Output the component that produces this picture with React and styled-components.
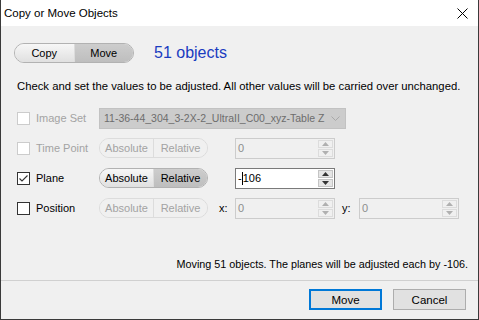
import React from "react";
import styled, { createGlobalStyle, css } from "styled-components";

const GlobalStyle = createGlobalStyle`
  html, body {
    margin: 0;
    padding: 0;
    background: #f0f0f0;
  }
  body {
    font-family: "Liberation Sans", Arial, sans-serif;
    font-size: 11px;
    color: #000;
  }
`;

const Window = styled.div`
  width: 479px;
  height: 320px;
  box-sizing: border-box;
  border: 1px solid #3a3a3a;
  border-top: none;
  background: #f0f0f0;
  display: flex;
  flex-direction: column;
  overflow: hidden;
`;

const TitleBar = styled.div`
  height: 26px;
  flex: none;
  background: #fff;
  display: flex;
  align-items: center;
  justify-content: space-between;
  padding: 0 10px 0 3px;
`;

const Title = styled.div`
  font-size: 11.5px;
  color: #000;
  padding-bottom: 1px;
`;

const CloseIcon = styled.svg`
  width: 11px;
  height: 11px;
  display: block;
`;

const Body = styled.div`
  flex: 1;
  display: flex;
  flex-direction: column;
  padding-top: 17px;
`;

const TopRow = styled.div`
  display: flex;
  align-items: center;
  height: 20px;
  padding-left: 13px;
`;

const Count = styled.div`
  margin-left: 20px;
  font-size: 16px;
  color: #1a3cc0;
  padding-bottom: 1px;
`;

const Segmented = styled.div`
  display: flex;
  box-sizing: border-box;
  width: ${({ width }) => width}px;
  height: 20px;
  border-radius: 10px;
  border: 1px solid ${({ disabled }) => (disabled ? "#dcdcdc" : "#b2b2b2")};
  overflow: hidden;
  flex: none;
`;

const Segment = styled.div`
  flex: 1;
  display: flex;
  align-items: center;
  justify-content: center;
  color: ${({ disabled }) => (disabled ? "#a3a3a3" : "#000")};
  & + & {
    border-left: 1px solid ${({ disabled }) => (disabled ? "#dcdcdc" : "#b8b8b8")};
  }
  ${({ disabled, selected }) =>
    disabled
      ? css`
          background: #f0f0f0;
        `
      : selected
      ? css`
          background: linear-gradient(#cdcdcd, #bebebe);
        `
      : css`
          background: linear-gradient(#f7f7f7, #e0e0e0);
        `}
`;

const Instructions = styled.div`
  margin-top: 17px;
  padding-left: 16px;
  line-height: 13px;
  height: 13px;
  font-size: 11.3px;
  white-space: nowrap;
`;

const Rows = styled.div`
  margin-top: 10px;
  display: flex;
  flex-direction: column;
`;

const Row = styled.div`
  height: 30px;
  display: flex;
  align-items: center;
  padding-left: 16px;
`;

const LabelCell = styled.div`
  width: 82px;
  flex: none;
  display: flex;
  align-items: center;
  gap: 6px;
  color: ${({ disabled }) => (disabled ? "#a3a3a3" : "#000")};
`;

const Box = styled.div`
  width: 13px;
  height: 13px;
  box-sizing: border-box;
  background: #fff;
  border: 1px solid ${({ disabled }) => (disabled ? "#cccccc" : "#333")};
  display: flex;
  align-items: center;
  justify-content: center;
`;

const Combo = styled.div`
  width: 247px;
  height: 21px;
  box-sizing: border-box;
  background: #cccccc;
  border: 1px solid #c2c2c2;
  display: flex;
  align-items: center;
  gap: 5px;
  padding: 0 5px 0 4px;
  color: #6d6d6d;
  font-size: 10.5px;
  white-space: nowrap;
`;

const ComboText = styled.span`
  flex: 1;
  overflow: hidden;
`;

const AxisLabel = styled.div`
  width: ${({ width }) => width}px;
  flex: none;
  box-sizing: border-box;
  padding-left: ${({ pad }) => pad}px;
  color: #000;
`;

const Spin = styled.div`
  width: 100px;
  height: 21px;
  flex: none;
  box-sizing: border-box;
  border: 1px solid ${({ disabled }) => (disabled ? "#cccccc" : "#7a7a7a")};
  background: ${({ disabled }) => (disabled ? "#f0f0f0" : "#fff")};
  display: flex;
  align-items: stretch;
  padding: 1px;
`;

const SpinText = styled.div`
  flex: 1;
  display: flex;
  align-items: center;
  padding-left: 1px;
  color: ${({ disabled }) => (disabled ? "#8d8d8d" : "#000")};
`;

const Caret = styled.span`
  display: inline-block;
  width: 1px;
  height: 13px;
  background: #000;
`;

const SpinButtons = styled.div`
  width: 15px;
  display: flex;
  flex-direction: column;
  gap: 1px;
`;

const SpinButton = styled.div`
  flex: 1;
  display: flex;
  align-items: center;
  justify-content: center;
  background: ${({ disabled }) => (disabled ? "#f0f0f0" : "#e5e5e5")};
  border: 1px solid ${({ disabled }) => (disabled ? "#dcdcdc" : "#c4c4c4")};
`;

const Status = styled.div`
  margin-top: 35px;
  height: 13px;
  line-height: 13px;
  text-align: right;
  padding-right: 10px;
  font-size: 10.8px;
`;

const Separator = styled.div`
  margin-top: 9px;
  height: 1px;
  background: #d0d0d0;
`;

const ButtonBar = styled.div`
  display: flex;
  justify-content: flex-end;
  gap: 11px;
  padding: 8px 12px 0 0;
`;

const Button = styled.div`
  width: 73px;
  height: 21px;
  box-sizing: border-box;
  background: #e1e1e1;
  border: ${({ primary }) => (primary ? "2px solid #0078d7" : "1px solid #adadad")};
  display: flex;
  align-items: center;
  justify-content: center;
  font-size: 11.5px;
`;

const Arrow = ({ up, disabled }) => (
  <svg width="7" height="4" viewBox="0 0 7 4">
    <polygon
      points={up ? "3.5,0 7,4 0,4" : "0,0 7,0 3.5,4"}
      fill={disabled ? "#b0b0b0" : "#333"}
    />
  </svg>
);

const CheckBox = ({ checked, disabled }) => (
  <Box disabled={disabled}>
    {checked && (
      <svg width="11" height="11" viewBox="0 0 11 11">
        <polyline points="1.5,5.5 4,8 9.5,2.5" fill="none" stroke="#333" strokeWidth="1.1" />
      </svg>
    )}
  </Box>
);

const ModeToggle = ({ value, disabled }) => (
  <Segmented width={109} disabled={disabled}>
    <Segment disabled={disabled} selected={value === "abs"}>Absolute</Segment>
    <Segment disabled={disabled} selected={value === "rel"}>Relative</Segment>
  </Segmented>
);

const SpinBox = ({ children, disabled }) => (
  <Spin disabled={disabled}>
    <SpinText disabled={disabled}>{children}</SpinText>
    <SpinButtons>
      <SpinButton disabled={disabled}>
        <Arrow up disabled={disabled} />
      </SpinButton>
      <SpinButton disabled={disabled}>
        <Arrow disabled={disabled} />
      </SpinButton>
    </SpinButtons>
  </Spin>
);

export default function App() {
  return (
    <>
      <GlobalStyle />
      <Window>
        <TitleBar>
          <Title>Copy or Move Objects</Title>
          <CloseIcon viewBox="0 0 11 11">
            <path d="M0.5 0.5 L10.5 10.5 M10.5 0.5 L0.5 10.5" stroke="#000" strokeWidth="1" />
          </CloseIcon>
        </TitleBar>
        <Body>
          <TopRow>
            <Segmented width={120}>
              <Segment>Copy</Segment>
              <Segment selected>Move</Segment>
            </Segmented>
            <Count>51 objects</Count>
          </TopRow>
          <Instructions>
            Check and set the values to be adjusted. All other values will be carried over unchanged.
          </Instructions>
          <Rows>
            <Row>
              <LabelCell disabled>
                <CheckBox disabled />
                Image Set
              </LabelCell>
              <Combo>
                <ComboText>11-36-44_304_3-2X-2_UltraII_C00_xyz-Table Z</ComboText>
                <svg width="9" height="5" viewBox="0 0 9 5">
                  <polyline points="0.5,0.5 4.5,4.5 8.5,0.5" fill="none" stroke="#a8a8a8" />
                </svg>
              </Combo>
            </Row>
            <Row>
              <LabelCell disabled>
                <CheckBox disabled />
                Time Point
              </LabelCell>
              <ModeToggle disabled value="abs" />
              <AxisLabel width={27} />
              <SpinBox disabled>0</SpinBox>
            </Row>
            <Row>
              <LabelCell>
                <CheckBox checked />
                Plane
              </LabelCell>
              <ModeToggle value="rel" />
              <AxisLabel width={27} />
              <SpinBox>
                -<Caret />106
              </SpinBox>
            </Row>
            <Row>
              <LabelCell>
                <CheckBox />
                Position
              </LabelCell>
              <ModeToggle disabled value="abs" />
              <AxisLabel width={27} pad={11}>x:</AxisLabel>
              <SpinBox disabled>0</SpinBox>
              <AxisLabel width={24} pad={7}>y:</AxisLabel>
              <SpinBox disabled>0</SpinBox>
            </Row>
          </Rows>
          <Status>Moving 51 objects. The planes will be adjusted each by -106.</Status>
          <Separator />
          <ButtonBar>
            <Button primary>Move</Button>
            <Button>Cancel</Button>
          </ButtonBar>
        </Body>
      </Window>
    </>
  );
}
